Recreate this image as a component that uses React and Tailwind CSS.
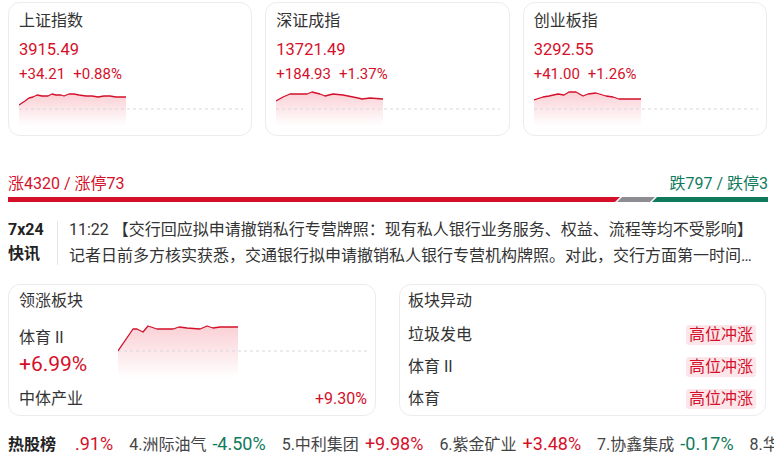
const RED = '#d4102a'

const indices = [
  {
    name: '上证指数',
    value: '3915.49',
    change: '+34.21',
    pct: '+0.88%',
    line: [[0,17],[6,13],[10,10],[14,9],[18,7],[23,8],[29,8],[33,6],[37,7],[42,7],[45,8],[50,6],[55,6],[60,7],[67,8],[73,8],[79,9],[85,8],[91,8],[97,9],[107,9]],
  },
  {
    name: '深证成指',
    value: '13721.49',
    change: '+184.93',
    pct: '+1.37%',
    line: [[0,13],[7,9],[14,6],[19,6],[31,6],[36,4],[44,6],[49,8],[57,6],[67,7],[82,10],[86,11],[94,10],[107,11]],
  },
  {
    name: '创业板指',
    value: '3292.55',
    change: '+41.00',
    pct: '+1.26%',
    line: [[0,12],[9,9],[15,8],[24,6],[30,7],[35,4],[42,4],[49,8],[54,6],[62,5],[72,8],[79,9],[85,11],[94,11],[107,11]],
  },
]

const ticker = [
  { name: '4.洲际油气', pct: '-4.50%', up: false },
  { name: '5.中利集团', pct: '+9.98%', up: true },
  { name: '6.紫金矿业', pct: '+3.48%', up: true },
  { name: '7.协鑫集成', pct: '-0.17%', up: false },
  { name: '8.华', pct: '', up: true },
]

function Spark({ id, points, width, height, base }) {
  const d = points.map((p, i) => (i ? 'L' : 'M') + p[0] + ' ' + p[1]).join(' ')
  const last = points[points.length - 1][0]
  return (
    <svg width={width} height={height} viewBox={`0 0 ${width} ${height}`} className="block">
      <defs>
        <linearGradient id={id} x1="0" y1="0" x2="0" y2="1">
          <stop offset="0" stopColor="#e8283f" stopOpacity="0.22" />
          <stop offset="1" stopColor="#e8283f" stopOpacity="0" />
        </linearGradient>
      </defs>
      <path d={`${d} L${last} ${height} L0 ${height} Z`} fill={`url(#${id})`} />
      <line x1="0" y1={base} x2={width} y2={base} stroke="#d8d8dc" strokeWidth="1" strokeDasharray="3 3" />
      <path d={d} fill="none" stroke={RED} strokeWidth="1.3" strokeLinejoin="round" />
    </svg>
  )
}

function IndexCard({ item, i }) {
  return (
    <div className="h-[134px] rounded-xl border border-[#ececef] bg-white pl-[10px] pt-[6px]">
      <div className="text-[16px] leading-6 text-[#333]">{item.name}</div>
      <div className="mt-[5px] text-[16.5px] leading-6 text-[#d4102a]">{item.value}</div>
      <div className="flex gap-2 text-[15px] leading-6 text-[#d4102a]">
        <span>{item.change}</span>
        <span>{item.pct}</span>
      </div>
      <div className="mt-[2px]">
        <Spark id={`g${i}`} points={item.line} width={224} height={38} base={21} />
      </div>
    </div>
  )
}

export default function App() {
  return (
    <div className="h-[455px] w-[774px] overflow-hidden bg-white pl-2 pr-[6px] pt-[2px] font-['Roboto','Noto_Sans_CJK_SC',sans-serif] text-[#333]">
      <div className="grid w-[759px] grid-cols-3 gap-[13px]">
        {indices.map((item, i) => (
          <IndexCard key={item.name} item={item} i={i} />
        ))}
      </div>

      <div className="mt-[36px] flex justify-between text-[16px] leading-6">
        <span className="text-[#d4102a]">涨4320 / 涨停73</span>
        <span className="text-[#0f7a5c]">跌797 / 跌停3</span>
      </div>
      <div className="mt-[1px] flex h-[5px]">
        <div className="w-[612px] bg-[#d4102a] [clip-path:polygon(0_0,100%_0,calc(100%-5px)_100%,0_100%)]" />
        <div className="-ml-[3px] w-[38px] bg-[#8c8c92] [clip-path:polygon(5px_0,100%_0,calc(100%-5px)_100%,0_100%)]" />
        <div className="-ml-[3px] flex-1 bg-[#0f7a5c] [clip-path:polygon(5px_0,100%_0,100%_100%,0_100%)]" />
      </div>

      <div className="mt-[15px] flex">
        <div className="w-[49px] shrink-0 text-[16px] font-bold leading-[24px] text-[#222]">
          <div className="pt-[1px]">7x24</div>
          <div>快讯</div>
        </div>
        <div className="mt-[4px] h-[44px] w-px self-start bg-[#e5e5e8]" />
        <div className="ml-[11px] min-w-0 flex-1 whitespace-nowrap text-[16px] leading-[26px] text-[#333]">
          <div>11:22 【交行回应拟申请撤销私行专营牌照：现有私人银行业务服务、权益、流程等均不受影响】</div>
          <div>记者日前多方核实获悉，交通银行拟申请撤销私人银行专营机构牌照。对此，交行方面第一时间…</div>
        </div>
      </div>

      <div className="mt-[15px] flex h-[132px] gap-[23px]">
        <div className="w-[368px] rounded-xl border border-[#ececef] pl-[10px] pr-[8px] pt-[4px]">
          <div className="text-[16px] leading-6">领涨板块</div>
          <div className="mt-[9px] flex h-[56px]">
            <div className="w-[99px] shrink-0 pt-[4px]">
              <div className="text-[16px] leading-6">体育 II</div>
              <div className="text-[21px] leading-7 text-[#d4102a]">+6.99%</div>
            </div>
            <Spark id="gl" points={[[0,29],[15,7],[19,7],[25,10],[30,4],[39,7],[55,7],[61,5],[69,6],[82,7],[89,4],[95,6],[102,5],[120,5]]} width={249} height={56} base={29} />
          </div>
          <div className="mt-[9px] flex justify-between text-[16px] leading-6">
            <span>中体产业</span>
            <span className="text-[#d4102a]">+9.30%</span>
          </div>
        </div>

        <div className="w-[367px] rounded-xl border border-[#ececef] pl-[8px] pr-[9px] pt-[4px]">
          <div className="text-[16px] leading-6">板块异动</div>
          <div className="mt-[6px]">
            {['垃圾发电', '体育 II', '体育'].map((n) => (
              <div key={n} className="flex h-[32px] items-center justify-between">
                <span className="text-[16px]">{n}</span>
                <span className="rounded-[3px] bg-[#fde6e9] px-[3px] text-[16px] leading-5 text-[#d4102a]">高位冲涨</span>
              </div>
            ))}
          </div>
        </div>
      </div>

      <div className="mt-[16px] flex items-baseline whitespace-nowrap text-[16px] leading-6">
        <span className="w-[67px] shrink-0 font-bold text-[#222]">热股榜</span>
        <span className="mr-[16px] text-[18px] text-[#d4102a]">.91%</span>
        {ticker.map((t) => (
          <span key={t.name} className="mr-[16px] flex items-baseline gap-[6px]">
            <span className="text-[#444]">{t.name}</span>
            {t.pct && (
              <span className={t.up ? 'text-[18px] text-[#d4102a]' : 'text-[18px] text-[#0f7a5c]'}>{t.pct}</span>
            )}
          </span>
        ))}
      </div>
    </div>
  )
}
